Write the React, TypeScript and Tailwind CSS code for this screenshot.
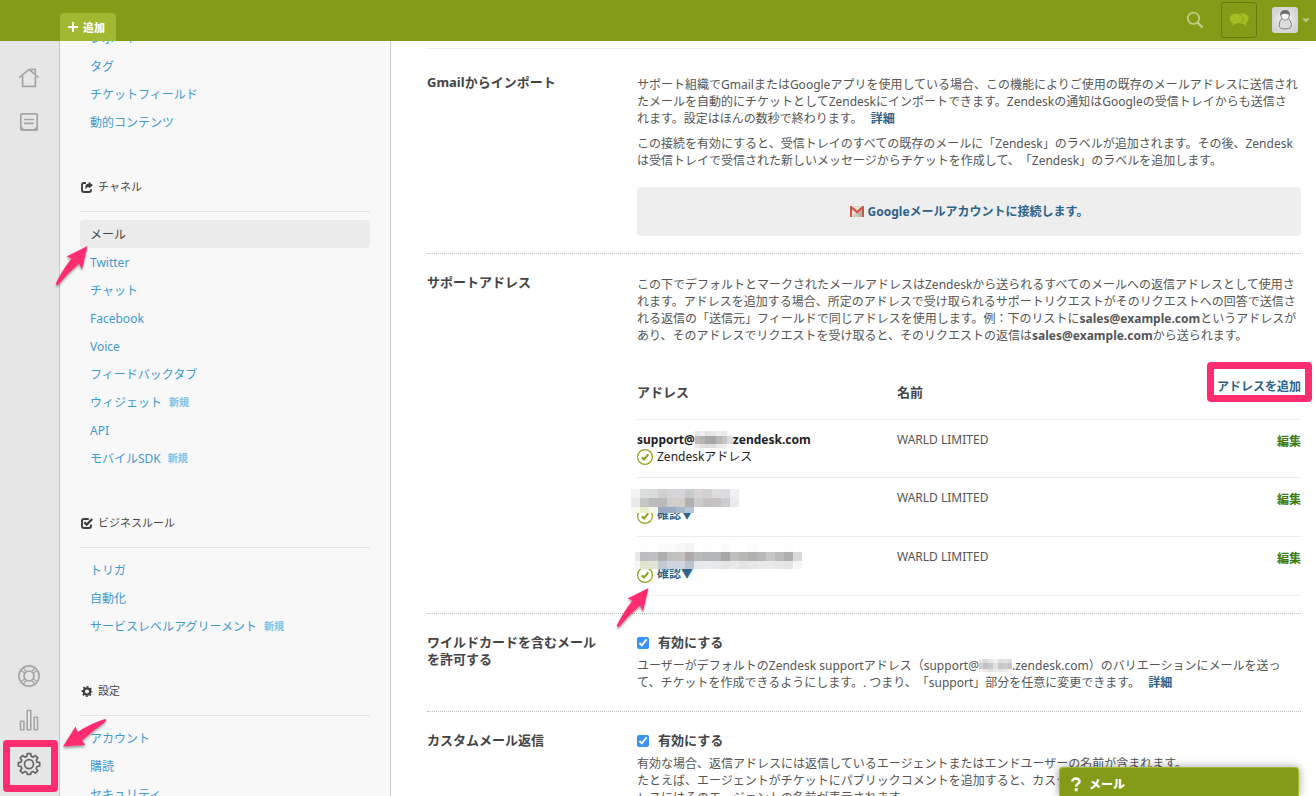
import type { ReactNode } from 'react';

const PINK = '#ff2d6f';

/* ---------- pixelated masks ---------- */

type MosaicProps = { rows: string[][]; cols: number[]; heights: number[]; className?: string };

function Mosaic({ rows, cols, heights, className }: MosaicProps) {
  const width = cols.reduce((a, b) => a + b, 0);
  const height = heights.reduce((a, b) => a + b, 0);
  const cells: ReactNode[] = [];
  let y = 0;
  rows.forEach((row, r) => {
    let x = 0;
    row.forEach((fill, c) => {
      if (fill) {
        cells.push(<rect key={`${r}-${c}`} x={x} y={y} width={cols[c]} height={heights[r]} fill={`#${fill}`} />);
      }
      x += cols[c];
    });
    y += heights[r];
  });
  return (
    <svg width={width} height={height} className={className} shapeRendering="crispEdges" aria-hidden="true">
      {cells}
    </svg>
  );
}

const split = (s: string) => s.split(' ').map((v) => (v === '-' ? '' : v));

const maskA = {
  cols: [9, 9, 9, 9, 9, 9, 9, 9, 9, 9, 9, 9],
  heights: [9, 9, 6],
  rows: [
    split('f3f3f3 dbdddc dadcdb d0d0d0 d6d6d8 d6d6d8 c9cacb d9d5d4 d2d2d2 dcdede dcdcde f0f0f4'),
    split('eaeaec c3c6c5 b9bbbc bababa cfcfd0 d2cfcb b3afaf cbcbcc c5c1c2 c5c2c1 cbcccd eaeaee'),
    split('f6f9ee e9efcb f4f6ea 9aaac6 9aaac4 a6b9cb b2c6d8 - - - - -'),
  ],
};

const maskB = {
  cols: [5, 9, 9, 9, 9, 9, 9, 9, 9, 9, 9, 9, 9, 9, 9, 9, 9, 9, 9],
  heights: [9, 9, 8],
  rows: [
    split('- fcfdfc - fafcfb fcfcfc f7f8f8 f3f4f4 - fcfcfc - fafbfa - - fcfcfc - - - fcfcfc -'),
    split('e8e8e8 bcbcbe bfbfc1 b0aeae bfc0c2 c5bfbe aea9a9 b8babc b2b6b8 b3b7b9 a5a8a7 c0c0be b8b8b6 b0b0ae b9b9b9 c7c7c6 bbbbbb afafad d9d9da'),
    split('f6f8f6 e0e4cc e2e4d8 c4cad4 ced4de cfd5e0 bac5d1 e6e8ea e8e9ea e6e8ea e4e5e5 e9e9e8 e2e2e2 e6e6e6 e9e9e9 e9e9e9 e6e6e6 e4e4e4 f6f6f6'),
  ],
};

const maskC = {
  cols: [5, 5, 5, 6, 6, 5, 6],
  heights: [5, 8, 4],
  rows: [
    split('e6e6e6 eeeeee e4e4e4 e6e8e6 eeeeee e9e9e9 fafafa'),
    split('c0b8b2 b4b4b4 a8a8a8 aaa6a8 b8b8ba c6c6c6 dcdcdc'),
    split('e9e9e9 e0e0e0 dedede e0dede eaeaea eeeeee f8f8f8'),
  ],
};

const maskD = {
  cols: [4, 5, 5, 5, 5, 5, 4],
  heights: [4, 6, 3],
  rows: [
    split('e6e6e6 dadada e6e6e6 f1f1f1 dedede e4e4e4 e0e0e0'),
    split('d0d0d0 c0c0c0 cacaca e0e0e0 c6c6c6 cccccc c3c3c3'),
    split('f0f0f0 e9e9e9 dfdfdf e9e9e9 e6e6e6 ececec f3f3f3'),
  ],
};

/* ---------- icons ---------- */

function HomeIcon() {
  return (
    <svg width="20" height="20" viewBox="0 0 20 20" fill="none" stroke="#a6a6a6" strokeWidth="1.7" strokeLinejoin="round" strokeLinecap="round" aria-hidden="true">
      <path d="M3.600 8.500V18.300h12.800V8.500" />
      <path d="M.900 9.200 10 1.400 19.100 9.200" />
      <path d="M12.200 2.800V1.400h4V6" />
    </svg>
  );
}

function ViewsIcon() {
  return (
    <svg width="20" height="20" viewBox="0 0 20 20" fill="none" stroke="#a6a6a6" strokeWidth="1.7" aria-hidden="true">
      <rect x="1.800" y="1.800" width="16.400" height="16.400" rx="1" />
      <path d="M5.800 7.500h8.400M5.800 11.300h8.400" strokeLinecap="round" />
      <path d="M1.500 13.500 5 17h10l3.500-3.500V18.500h-17z" fill="#a6a6a6" stroke="none" />
    </svg>
  );
}

function BuoyIcon() {
  return (
    <svg width="24" height="24" viewBox="0 0 24 24" fill="none" stroke="#a6a6a6" strokeWidth="1.7" aria-hidden="true">
      <circle cx="12" cy="12" r="10.1" />
      <circle cx="12" cy="12" r="5" />
      <path d="M4.2 6.4 8 9.4M6.4 4.2 9.4 8M19.8 6.4 16 9.4M17.6 4.2 14.6 8M4.2 17.6 8 14.6M6.4 19.8 9.4 16M19.8 17.6 16 14.6M17.6 19.8 14.6 16" strokeWidth="1.3" />
    </svg>
  );
}

function ChartIcon() {
  return (
    <svg width="22" height="22" viewBox="0 0 22 22" fill="none" stroke="#a6a6a6" strokeWidth="1.6" strokeLinejoin="round" aria-hidden="true">
      <path d="M2.500 12.200h3.400v8.500H2.500zM9.200 1.500h3.600v19.200H9.200zM16.100 8.200h3.400v12.500h-3.400z" />
    </svg>
  );
}

function GearOutlineIcon() {
  return (
    <svg width="24" height="24" viewBox="0 0 24 24" fill="none" stroke="#666666" strokeWidth="1.700" strokeLinejoin="round" aria-hidden="true">
      <path d="M10.300 1.600h3.400l.5 2.700 1.900.8 2.300-1.600 2.400 2.400-1.600 2.300.8 1.900 2.700.5v3.400l-2.700.5-.8 1.900 1.600 2.300-2.400 2.400-2.300-1.600-1.900.8-.5 2.100h-3.400l-.5-2.100-1.900-.8-2.300 1.600-2.400-2.400 1.600-2.300-.8-1.900-2.700-.5v-3.400l2.700-.5.8-1.900-1.600-2.300 2.400-2.400 2.300 1.600 1.900-.8z" />
      <circle cx="12" cy="12.100" r="4.500" />
    </svg>
  );
}

function ShareIcon() {
  return (
    <svg width="14" height="13" viewBox="0 0 14 13" fill="none" aria-hidden="true">
      <path d="M6 2H4Q2 2 2 4v5q0 2 2 2h5q2 0 2-2V8.300" stroke="#3d3d3d" strokeWidth="1.9" />
      <path d="M8.800 0.800 13 4.200 8.800 7.600V5.800Q6.600 5.800 5.600 8.600 4.300 2.700 8.800 2.600z" fill="#3d3d3d" />
    </svg>
  );
}

function CheckSquareIcon() {
  return (
    <svg width="14" height="13" viewBox="0 0 14 13" fill="none" stroke="#3d3d3d" aria-hidden="true">
      <path d="M8.800 2H4Q2 2 2 4v5q0 2 2 2h5q2 0 2-2V7.600" strokeWidth="1.9" />
      <path d="M4.300 5.200 6.700 7.600 12.200 2" strokeWidth="2.200" />
    </svg>
  );
}

function GearIcon() {
  return (
    <svg width="14" height="13" viewBox="0 0 14 13" fill="none" stroke="#3d3d3d" aria-hidden="true">
      <circle cx="7" cy="6.500" r="3.200" strokeWidth="2.300" />
      <circle cx="7" cy="6.500" r="4.700" strokeWidth="1.600" strokeDasharray="1.850 1.841" strokeDashoffset="0.900" />
    </svg>
  );
}

function GmailIcon() {
  return (
    <svg width="14" height="11" viewBox="0 0 14 11" aria-hidden="true">
      <rect width="14" height="11" rx="0.500" fill="#e4e0d8" />
      <path d="M7 6 13 11H1z" fill="#cfcac0" />
      <path d="M7 6.500 12 2v9H9z" fill="#b5b1a8" />
      <path d="M0 0h1.600L7 4.800 12.400 0H14v11h-2V3.200L7 7.400 2 3.200V11H0z" fill="#d2543f" />
    </svg>
  );
}

function CheckCircle() {
  return (
    <svg width="16" height="16" viewBox="0 0 16 16" fill="none" stroke="#8aa51c" className="shrink-0" aria-hidden="true">
      <circle cx="8" cy="8" r="7.400" strokeWidth="1.200" />
      <path d="M4.800 8.400 7 10.400 11.300 5.400" strokeWidth="2.100" />
    </svg>
  );
}

function UpArrow({ className }: { className: string }) {
  return (
    <svg width="38" height="46" viewBox="0 0 38 46" className={`pointer-events-none absolute z-20 drop-shadow-[0_2px_1px_rgba(0,0,0,0.35)] ${className}`} aria-hidden="true">
      <path d="M33.500 0 12.500 10.500 17.500 12.500Q9 23 2 37q0 3 2.500 1.500Q14 27 25 17.500L28 23.500z" fill={PINK} />
    </svg>
  );
}

function LeftArrow({ className }: { className: string }) {
  return (
    <svg width="50" height="36" viewBox="0 0 50 36" className={`pointer-events-none absolute z-20 drop-shadow-[0_2px_1px_rgba(0,0,0,0.35)] ${className}`} aria-hidden="true">
      <path d="M1 28.500 13.500 8.500 15.500 14Q29.500 5 43 1q2.500 1-.5 3.500Q30.500 13 20 22.500L23.500 27z" fill={PINK} />
    </svg>
  );
}

/* ---------- sidebar ---------- */

function NavItem({ label, active, fresh }: { label: string; active?: boolean; fresh?: boolean }) {
  return (
    <li>
      <a
        href="#"
        className={
          active
            ? 'flex h-7 items-center rounded bg-[#ebebeb] px-[10px] text-[#444444]'
            : 'flex h-7 items-center rounded px-[10px] text-[#3f98d0]'
        }
      >
        {label}
        {fresh && <span className="ml-[7px] pt-px text-[10px] font-black text-[#87c6e6]">新規</span>}
      </a>
    </li>
  );
}

function NavHeading({ icon, children }: { icon: ReactNode; children: ReactNode }) {
  return (
    <h2 className="mt-10 mb-2 flex items-start gap-1 border-b border-[#e3e3e3] pb-[13px] text-[11px] leading-[22px] text-[#444444]">
      <span className="flex h-[22px] items-center">{icon}</span>
      {children}
    </h2>
  );
}

/* ---------- settings ---------- */

function Section({ title, children, last }: { title: string; children: ReactNode; last?: boolean }) {
  return (
    <section className={last ? 'flex pt-5' : 'flex border-b border-dotted border-[#bdbdbd] pt-5'}>
      <h3 className="w-[210px] shrink-0 pr-[30px] text-[13px] leading-[17px] font-bold text-[#444444]">{title}</h3>
      <div className="min-w-0 flex-1">{children}</div>
    </section>
  );
}

function EnableBox({ id }: { id: string }) {
  return (
    <div className="flex h-[17px] items-center gap-[9px]">
      <input id={id} type="checkbox" defaultChecked className="size-3 accent-[#3b93f7]" />
      <label htmlFor={id} className="text-[13px] leading-[17px] font-bold text-[#444444]">
        有効にする
      </label>
    </div>
  );
}

function MoreLink() {
  return (
    <a href="#" className="ml-[5px] font-bold text-[#2d6289]">
      詳細
    </a>
  );
}

function VerifyLink() {
  return (
    <a href="#" className="flex h-[17px] items-center gap-1 font-bold text-[#2d6289]">
      <CheckCircle />
      <span className="pb-[2px]">確認▼</span>
    </a>
  );
}

function EditCell() {
  return (
    <td className="pt-[13px] text-right font-bold">
      <a href="#" className="text-[#3a7a0c]">
        編集
      </a>
    </td>
  );
}

export default function App() {
  return (
    <div className="relative flex h-screen flex-col overflow-hidden bg-white font-['Noto_Sans','Noto_Sans_CJK_JP',sans-serif] text-[12px] leading-[17px] text-[#555555] [text-spacing-trim:space-all]">
      <header className="flex h-[41px] shrink-0 items-end justify-between bg-[#839b16] pl-[60px]">
        <button type="button" className="flex h-7 w-14 items-center gap-[5px] rounded-t bg-[#a1b831] pl-2 text-[11px] font-black text-white">
          <svg width="10" height="10" viewBox="0 0 10 10" stroke="white" strokeWidth="2" aria-hidden="true">
            <path d="M5 0v10M0 5h10" />
          </svg>
          追加
        </button>
        <div className="flex h-full items-center pr-[6px] pb-px">
          <button type="button" aria-label="検索" className="mr-[17px]">
            <svg width="18" height="18" viewBox="0 0 18 18" fill="none" stroke="#c3cf8a" strokeWidth="1.700" aria-hidden="true">
              <circle cx="7.500" cy="7.300" r="5.700" />
              <path d="M11.500 11.500 16.500 16.500" strokeWidth="2.200" />
            </svg>
          </button>
          <button type="button" aria-label="チャット" className="flex size-9 items-center justify-center rounded-[3px] border border-[#657a14]">
            <svg width="20" height="16" viewBox="0 0 20 16" fill="#a3bd22" aria-hidden="true">
              <path d="M12.800 1.200c3.900 0 6.900 2.200 6.900 5.200 0 2-1.100 3.500-2.700 4.400.1 1.400.6 2.600 1.300 3.400-1.800-.3-3.300-1.300-4.200-2.500H10V1.700z" />
              <path d="M7.200 1.200c4.100 0 6.900 2.300 6.900 5.400s-2.800 5.400-6.900 5.400h-.6c-1 1.500-2.500 2.300-4.300 2.500.8-.9 1.200-2 1.200-3.200C1.600 10.400.300 8.700.300 6.600c0-3.100 2.800-5.400 6.900-5.400z" stroke="#7d9414" strokeWidth="0.800" />
            </svg>
          </button>
          <button type="button" aria-label="プロフィール" className="ml-[15px] flex items-center gap-1">
            <svg width="26" height="26" viewBox="0 0 26 26" aria-hidden="true">
              <defs>
                <radialGradient id="avatar">
                  <stop offset="0" stopColor="#f8f8f8" />
                  <stop offset="1" stopColor="#d4d4d4" />
                </radialGradient>
              </defs>
              <rect width="26" height="26" rx="3" fill="url(#avatar)" />
              <path d="M9.800 11.500C7.500 14 6.800 17 7.500 20c1.500 2.600 10 2.600 11.600 0 .7-3-.2-6-2.500-8.500z" fill="#dcdcdc" stroke="#7a7a7a" strokeWidth="1" />
              <path d="M9 8.200C9 5.500 10.800 4.200 13.200 4.200s4 1.500 4 4.200-1.600 4.600-4 4.600S9 11 9 8.200z" fill="#f4f4f4" stroke="#7a7a7a" strokeWidth="0.800" />
              <path d="M8.300 9C7.500 5 10 3 13 3c3.500 0 5.500 2 4.700 5.800C16.800 7 15 6.400 12.500 6.700 10.500 7 9.300 7.300 8.300 9z" fill="#6e6e6e" />
            </svg>
            <svg width="8" height="5" viewBox="0 0 8 5" fill="#bcc985" aria-hidden="true">
              <path d="M0 .5h8L4 4.500z" />
            </svg>
          </button>
        </div>
      </header>

      <div className="flex min-h-0 flex-1">
        <nav aria-label="メイン" className="flex w-[60px] shrink-0 flex-col justify-between border-r border-[#c8c8c8] bg-[#e6e6e6] pt-[15px] pr-px pb-[10px]">
          <div className="flex flex-col">
            <a href="#" aria-label="ホーム" className="flex h-11 items-center justify-center"><HomeIcon /></a>
            <a href="#" aria-label="ビュー" className="flex h-11 items-center justify-center"><ViewsIcon /></a>
          </div>
          <div className="flex flex-col">
            <a href="#" aria-label="ヘルプ" className="flex h-11 items-center justify-center"><BuoyIcon /></a>
            <a href="#" aria-label="レポート" className="flex h-11 items-center justify-center"><ChartIcon /></a>
            <a href="#" aria-label="管理" className="relative flex h-11 items-center justify-center">
              <GearOutlineIcon />
              <span className="pointer-events-none absolute -top-[2px] left-[3px] z-20 h-[52px] w-[55px] rounded border-[7px] border-[#ff2d6f]" />
              <LeftArrow className="-top-[24px] left-[62px]" />
            </a>
          </div>
        </nav>

        <aside className="w-[331px] shrink-0 border-r border-[#cccccc] bg-[#f8f8f8] pr-5 pl-5 [clip-path:inset(0_0_0_-40px)]">
          <ul className="-mt-[17px]">
            <NavItem label="レポート" />
            <NavItem label="タグ" />
            <NavItem label="チケットフィールド" />
            <NavItem label="動的コンテンツ" />
          </ul>
          <NavHeading icon={<ShareIcon />}>チャネル</NavHeading>
          <div className="relative">
            <ul>
              <NavItem label="メール" active />
              <NavItem label="Twitter" />
              <NavItem label="チャット" />
              <NavItem label="Facebook" />
              <NavItem label="Voice" />
              <NavItem label="フィードバックタブ" />
              <NavItem label="ウィジェット" fresh />
              <NavItem label="API" />
              <NavItem label="モバイルSDK" fresh />
            </ul>
            <UpArrow className="top-[26px] -left-[26px]" />
          </div>
          <NavHeading icon={<CheckSquareIcon />}>ビジネスルール</NavHeading>
          <ul>
            <NavItem label="トリガ" />
            <NavItem label="自動化" />
            <NavItem label="サービスレベルアグリーメント" fresh />
          </ul>
          <NavHeading icon={<GearIcon />}>設定</NavHeading>
          <ul>
            <NavItem label="アカウント" />
            <NavItem label="購読" />
            <NavItem label="セキュリティ" />
          </ul>
        </aside>

        <main className="min-w-0 flex-1 overflow-hidden pt-[7px] pr-[15px] pl-9">
          <div className="border-t border-[#ebebeb] pt-[5px]">
            <Section title="Gmailからインポート">
              <div className="flex flex-col pt-[2px] pb-[17px]">
                <p>
                  サポート組織でGmailまたはGoogleアプリを使用している場合、この機能によりご使用の既存のメールアドレスに送信されたメールを自動的にチケットとしてZendeskにインポートできます。Zendeskの通知はGoogleの受信トレイからも送信さ
                  <br />
                  れます。設定はほんの数秒で終わります。 <MoreLink />
                </p>
                <p className="mt-2">
                  この接続を有効にすると、受信トレイのすべての既存のメールに「Zendesk」のラベルが追加されます。その後、Zendeskは受信トレイで受信された新しいメッセージからチケットを作成して、「Zendesk」のラベルを追加します。
                </p>
                <a href="#" className="mt-[18px] flex h-[49px] items-center justify-center gap-1 rounded bg-[#eeeeee] font-bold text-[#2d6289]">
                  <GmailIcon />
                  Googleメールアカウントに接続します。
                </a>
              </div>
            </Section>

            <Section title="サポートアドレス">
              <div className="pt-[2px] pb-[17px]">
                <p>
                  この下でデフォルトとマークされたメールアドレスはZendeskから送られるすべてのメールへの返信アドレスとして使用されます。アドレスを追加する場合、所定のアドレスで受け取られるサポートリクエストがそのリクエストへの回答で送信される返信の「送信元」フィールドで同じアドレスを使用します。例：下のリストに<b>sales@example.com</b>というアドレスがあり、そのアドレスでリクエストを受け取ると、そのリクエストの返信は<b>sales@example.com</b>から送られます。
                </p>
                <table className="mt-[22px] w-full table-fixed border-separate border-spacing-0 text-left [&_td]:border-b [&_td]:border-[#ebebeb] [&_td]:align-top [&_th]:border-b [&_th]:border-[#ebebeb]">
                  <thead>
                    <tr className="h-[54px] text-[13px] text-[#444444]">
                      <th className="w-[260px] p-0 font-bold">アドレス</th>
                      <th className="p-0 font-bold">名前</th>
                      <th className="w-[120px] p-0 pb-3 text-right text-[12px] font-bold">
                        <a href="#" className="relative inline-block text-[#2d6289]">
                          アドレスを追加
                          <span className="pointer-events-none absolute -top-4 -right-[11px] -bottom-[7px] -left-[10px] rounded border-[7px] border-[#ff2d6f]" />
                        </a>
                      </th>
                    </tr>
                  </thead>
                  <tbody>
                    <tr className="h-[58px]">
                      <td className="pt-[11px] text-[#222222]">
                        <div className="flex h-[17px] items-center font-bold">
                          support@
                          <Mosaic {...maskC} />
                          zendesk.com
                        </div>
                        <div className="flex h-[17px] items-center gap-1">
                          <CheckCircle />
                          Zendeskアドレス
                        </div>
                      </td>
                      <td className="pt-[11px]">WARLD LIMITED</td>
                      <EditCell />
                    </tr>
                    <tr className="h-[59px]">
                      <td className="pt-[11px]">
                        <div className="relative pt-[18px]">
                          <VerifyLink />
                          <Mosaic {...maskA} className="absolute top-0 -left-[6px]" />
                        </div>
                      </td>
                      <td className="pt-[11px]">WARLD LIMITED</td>
                      <EditCell />
                    </tr>
                    <tr className="h-[59px]">
                      <td className="pt-[11px]">
                        <div className="relative pt-[18px]">
                          <VerifyLink />
                          <Mosaic {...maskB} className="absolute -top-[5px] -left-[2px]" />
                          <UpArrow className="top-10 -left-[22px]" />
                        </div>
                      </td>
                      <td className="pt-[11px]">WARLD LIMITED</td>
                      <EditCell />
                    </tr>
                  </tbody>
                </table>
              </div>
            </Section>

            <Section title="ワイルドカードを含むメールを許可する">
              <EnableBox id="wildcard" />
              <p className="mt-[6px] pb-5">
                ユーザーがデフォルトのZendesk supportアドレス（support@
                <Mosaic {...maskD} className="inline align-[-2px]" />
                .zendesk.com）のバリエーションにメールを送って、チケットを作成できるようにします。. つまり、「support」部分を任意に変更できます。 <MoreLink />
              </p>
            </Section>

            <Section title="カスタムメール返信" last>
              <EnableBox id="personalized" />
              <p className="mt-[6px]">
                有効な場合、返信アドレスには返信しているエージェントまたはエンドユーザーの名前が含まれます。
                <br />
                たとえば、エージェントがチケットにパブリックコメントを追加すると、カスタムメール返信アド
                <br />
                レスにはそのエージェントの名前が表示されます。
              </p>
            </Section>
          </div>
        </main>
      </div>

      <button type="button" className="absolute right-[17px] bottom-0 z-10 flex h-[29px] w-60 items-center gap-2 rounded-t border border-b-0 border-[#a3bb33] bg-[#839b16] pt-1 pl-[11px] text-[12px] font-black text-white shadow-[0_0_8px_rgba(0,0,0,0.4)]">
        <svg width="10" height="15" viewBox="0 0 10 15" fill="none" stroke="white" aria-hidden="true">
          <path d="M1.300 4.500C1.300 2.500 3 1.500 5 1.500s3.500 1 3.500 3c0 2.300-3.300 2.300-3.300 5" strokeWidth="2.600" />
          <path d="M5.200 11.200v3" strokeWidth="3" />
        </svg>
        メール
      </button>
    </div>
  );
}
